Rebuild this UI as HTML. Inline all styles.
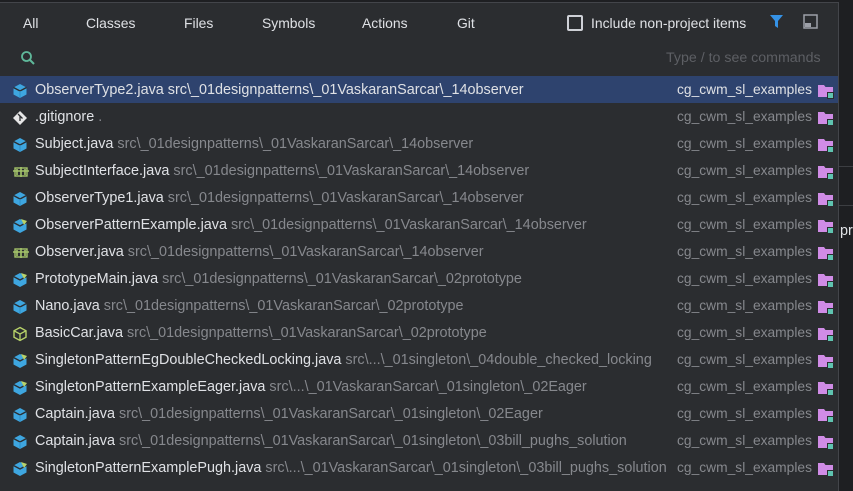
<!DOCTYPE html>
<html><head><style>
body{margin:0;width:853px;height:490px;overflow:hidden;background:#1e1f22;font-family:"Liberation Sans",sans-serif;font-size:14.4px;}
#p{position:absolute;left:0;top:2px;width:838px;height:488px;background:#2b2d30;border-right:1px solid #43454a;border-top:1px solid #43454a;}
.tab{position:absolute;top:12px;color:#dfe1e5;font-size:13.9px}
.row{position:absolute;left:0;width:838px;height:27px;line-height:28px;color:#dfe1e5;white-space:nowrap}
.row.sel{background:#2e436e}
.row .ic{position:absolute;left:12px;top:5px}
.row .t{position:absolute;left:35px}
.row .g{color:#86888d}
.row .m{position:absolute;right:26px;color:#86888d;font-size:13.8px}
.row.sel .m,.row.sel .g{color:#dfe1e5}
.row .f{position:absolute;right:3px;top:5px}
</style></head><body>
<div style="position:absolute;left:838px;top:166px;width:15px;height:1px;background:#3c3e42"></div>
<div style="position:absolute;left:838px;top:205px;width:15px;height:1px;background:#3c3e42"></div>
<div style="position:absolute;left:840px;top:223px;color:#dfe1e5;font-size:14.4px">pro</div>
<div id="p">
<span class="tab" style="left:23px">All</span>
<span class="tab" style="left:86px">Classes</span>
<span class="tab" style="left:184px">Files</span>
<span class="tab" style="left:262px">Symbols</span>
<span class="tab" style="left:362px">Actions</span>
<span class="tab" style="left:457px">Git</span>
<div style="position:absolute;left:567px;top:12px;width:12px;height:12px;border:2px solid #ced0d6;border-radius:2px"></div>
<span class="tab" style="left:591px">Include non-project items</span>
<svg style="position:absolute;left:769px;top:11px" width="15" height="15"><path d="M1 1H14L9 7V14L6 12V7Z" fill="#3592e6"/></svg>
<svg style="position:absolute;left:803px;top:11px" width="15" height="15"><rect x="1" y="1" width="13" height="13" fill="none" stroke="#9da0a8" stroke-width="1.5"/><rect x="2" y="9" width="6" height="4" fill="#9da0a8"/></svg>
<svg style="position:absolute;left:20px;top:47px" width="16" height="16"><circle cx="6.5" cy="6.5" r="4.5" fill="none" stroke="#5fb89a" stroke-width="1.8"/><path d="M10 10L14 14" stroke="#5fb89a" stroke-width="2"/></svg>
<span style="position:absolute;left:666px;top:47px;color:#5d5f64;font-size:14.2px">Type / to see commands</span>
</div>
<div id="rows"></div>
<script>
var R=[
["c","ObserverType2.java"," src\\_01designpatterns\\_01VaskaranSarcar\\_14observer",1],
["git",".gitignore"," ."],
["c","Subject.java"," src\\_01designpatterns\\_01VaskaranSarcar\\_14observer"],
["i","SubjectInterface.java"," src\\_01designpatterns\\_01VaskaranSarcar\\_14observer"],
["c","ObserverType1.java"," src\\_01designpatterns\\_01VaskaranSarcar\\_14observer"],
["cm","ObserverPatternExample.java"," src\\_01designpatterns\\_01VaskaranSarcar\\_14observer"],
["i","Observer.java"," src\\_01designpatterns\\_01VaskaranSarcar\\_14observer"],
["cm","PrototypeMain.java"," src\\_01designpatterns\\_01VaskaranSarcar\\_02prototype"],
["c","Nano.java"," src\\_01designpatterns\\_01VaskaranSarcar\\_02prototype"],
["a","BasicCar.java"," src\\_01designpatterns\\_01VaskaranSarcar\\_02prototype"],
["cm","SingletonPatternEgDoubleCheckedLocking.java"," src\\...\\_01singleton\\_04double_checked_locking"],
["cm","SingletonPatternExampleEager.java"," src\\...\\_01VaskaranSarcar\\_01singleton\\_02Eager"],
["c","Captain.java"," src\\_01designpatterns\\_01VaskaranSarcar\\_01singleton\\_02Eager"],
["c","Captain.java"," src\\_01designpatterns\\_01VaskaranSarcar\\_01singleton\\_03bill_pughs_solution"],
["cm","SingletonPatternExamplePugh.java"," src\\...\\_01VaskaranSarcar\\_01singleton\\_03bill_pughs_solution"]];
var ic={
c:'<svg width="16" height="16"><path d="M8 1L14.5 4.5V11.5L8 15L1.5 11.5V4.5Z" fill="#3ea6e0"/><path d="M1.5 4.5L8 8L14.5 4.5" fill="none" stroke="#2b2d30" stroke-width="1.3"/><path d="M8 8V15" stroke="#2f8fc6" stroke-width="1"/></svg>',
cm:'<svg width="16" height="16"><path d="M8 1L14.5 4.5V11.5L8 15L1.5 11.5V4.5Z" fill="#3ea6e0"/><path d="M1.5 4.5L8 8L14.5 4.5" fill="none" stroke="#2b2d30" stroke-width="1.3"/><path d="M9 1L15 3L12 7Z" fill="#b8d36a"/></svg>',
a:'<svg width="16" height="16"><path d="M8 1.5L14 4.8V11.2L8 14.5L2 11.2V4.8Z" fill="none" stroke="#b8d36a" stroke-width="1.4"/><path d="M2 4.8L8 8L14 4.8M8 8V14.5" fill="none" stroke="#b8d36a" stroke-width="1.3"/></svg>',
i:'<svg width="18" height="16"><path d="M1 7H17M9 3V13M5 5V11M13 5V11" stroke="#a4c46a" stroke-width="1.6" fill="none"/><rect x="3" y="4" width="12" height="8" fill="none" stroke="#a4c46a" stroke-width="1.4"/></svg>',
git:'<svg width="16" height="16"><path d="M8 1L15 8L8 15L1 8Z" fill="#e6e6e6"/><path d="M6 4L8 6V11M8 6L10.5 8.5" stroke="#2b2d30" stroke-width="1.3" fill="none"/></svg>'};
var fold='<svg width="18" height="15"><path d="M1 1H7L8.5 3H16V13H1Z" fill="#d08ce6"/><rect x="10" y="8" width="7" height="7" fill="#2b2d30"/><rect x="11" y="9" width="5" height="5" fill="#5fc4b0"/></svg>';
var h='';
R.forEach(function(r,k){h+='<div class="row'+(r[3]?' sel':'')+'" style="top:'+(76+k*27)+'px"><span class="ic">'+ic[r[0]]+'</span><span class="t">'+r[1]+'<span class="g">'+r[2]+'</span></span><span class="m">cg_cwm_sl_examples</span><span class="f">'+fold+'</span></div>';});
document.getElementById('rows').innerHTML=h;
</script>
</body></html>
